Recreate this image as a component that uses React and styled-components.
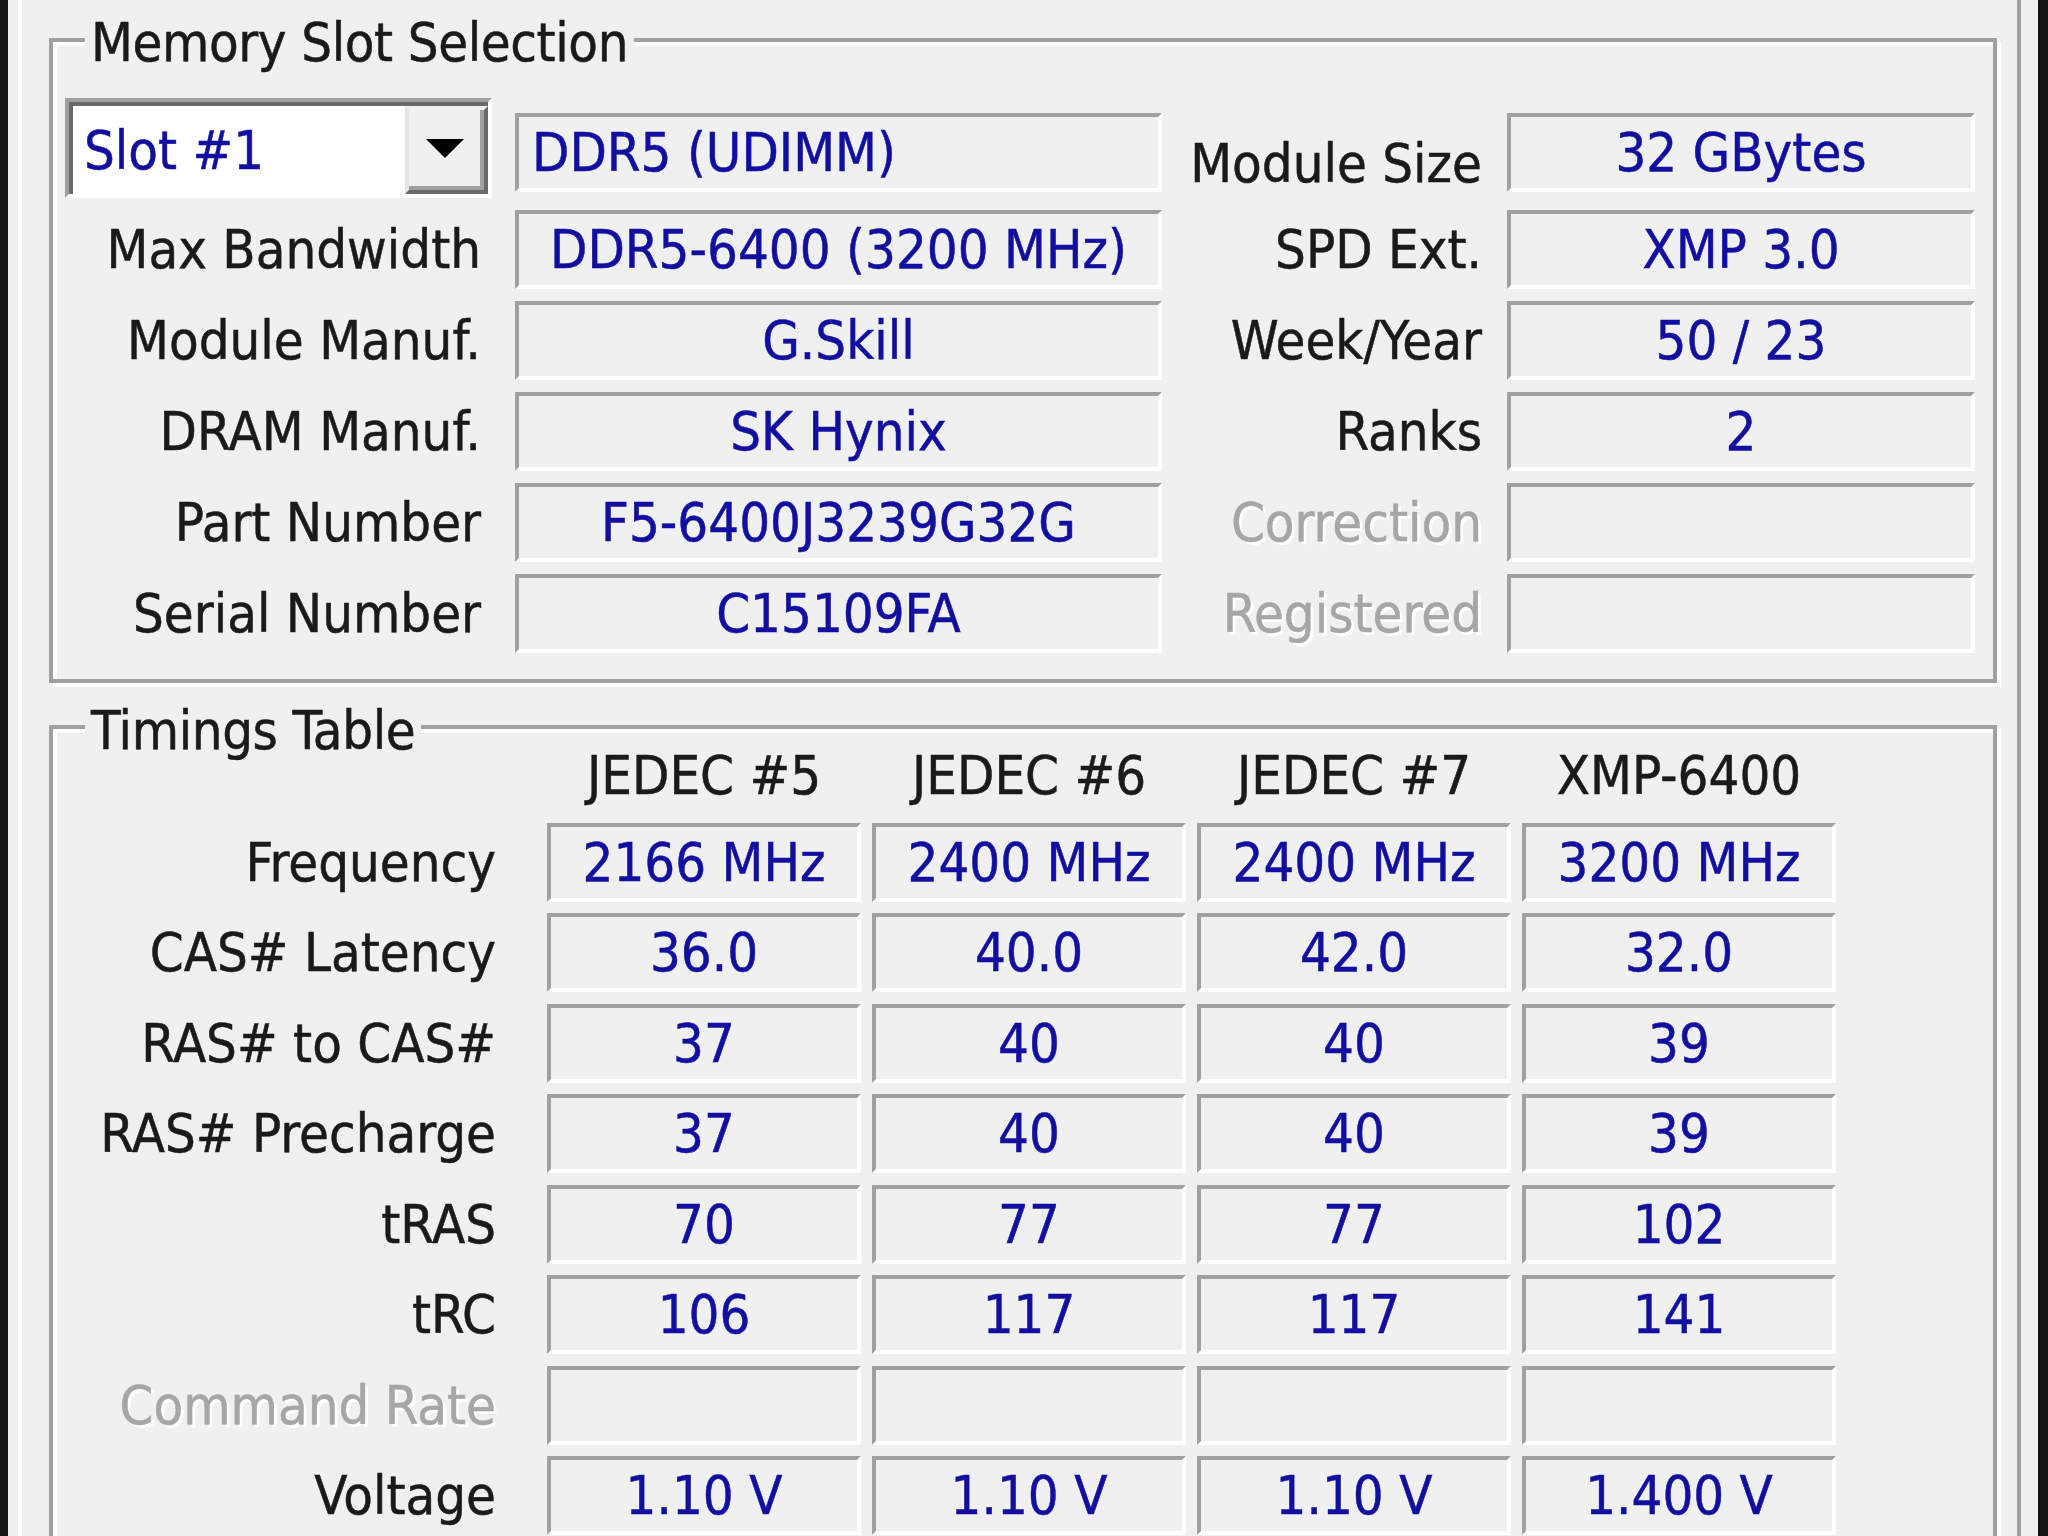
import React from 'react'
import styled, { createGlobalStyle } from 'styled-components'

//#region STYLES

const GlobalStyle = createGlobalStyle`
  html, body {
    margin: 0;
    padding: 0;
    width: 2048px;
    height: 1536px;
    overflow: hidden;
    background: #141414;
  }
  body {
    font-family: "DejaVu Sans Condensed", "Liberation Sans", sans-serif;
    font-size: 54px;
    -webkit-text-stroke: 0.5px currentColor;
  }
`

const Screen = styled.div`
  box-sizing: border-box;
  width: 2048px;
  height: 1536px;
  padding: 0 10px 0 8px;
  background: #141414;
`

const Frame = styled.div`
  box-sizing: border-box;
  height: 100%;
  padding: 0 17px 0 10px;
  background: #f0f0f0;
`

const TabPage = styled.div`
  box-sizing: border-box;
  height: 100%;
  padding: 38px 0 0 27px;
  border-left: 4px solid #ffffff;
  border-right: 4px solid #a0a0a0;
  background: #f0f0f0;
`

const GroupBox = styled.div`
  position: relative;
  box-sizing: border-box;
  width: 1948px;
  margin-bottom: 42px;
  border: 4px solid #a0a0a0;
  box-shadow: inset 4px 4px 0 #ffffff, 4px 4px 0 #ffffff;
  padding: ${props => props.$padding};
`

const Legend = styled.div`
  position: absolute;
  left: 32px;
  top: ${props => props.$top}px;
  padding: 0 6px;
  line-height: 56px;
  letter-spacing: -0.4px;
  background: #f0f0f0;
  color: #1a1a1a;
  white-space: nowrap;
`

const SlotGrid = styled.div`
  display: grid;
  grid-template-columns: 450px 647px 345px 468px;
  grid-template-rows: 100px repeat(5, 79px);
  row-gap: 12px;
`

const Label = styled.div`
  box-sizing: border-box;
  display: flex;
  align-items: center;
  justify-content: flex-end;
  padding-right: ${props => props.$pad}px;
  padding-top: ${props => props.$shift || 0}px;
  white-space: nowrap;
  color: ${props => (props.$disabled ? '#a6a6a6' : '#1a1a1a')};
  text-shadow: ${props => (props.$disabled ? '3px 3px 0 #ffffff' : 'none')};
`

const Field = styled.div`
  box-sizing: border-box;
  height: 79px;
  align-self: ${props => (props.$top ? 'start' : 'stretch')};
  margin-top: ${props => (props.$top ? '15px' : '0')};
  display: flex;
  align-items: center;
  justify-content: ${props => (props.$left ? 'flex-start' : 'center')};
  padding-left: ${props => (props.$left ? '13px' : '0')};
  border-style: solid;
  border-width: 4px;
  border-color: #a0a0a0 #ffffff #ffffff #a0a0a0;
  color: #120fa0;
  white-space: nowrap;
`

const Combo = styled.div`
  box-sizing: border-box;
  width: 427px;
  height: 100px;
  border-style: solid;
  border-width: 4px;
  border-color: #a0a0a0 #ffffff #ffffff #a0a0a0;
`

const ComboInner = styled.div`
  box-sizing: border-box;
  height: 100%;
  display: flex;
  border-top: 4px solid #696969;
  border-left: 4px solid #696969;
  background: #ffffff;
`

const ComboText = styled.div`
  flex: 1;
  display: flex;
  align-items: center;
  padding-left: 11px;
  color: #120fa0;
`

const ComboButton = styled.div`
  box-sizing: border-box;
  width: 83px;
  display: flex;
  align-items: center;
  justify-content: center;
  background: #f0f0f0;
  border-style: solid;
  border-width: 4px;
  border-color: #f0f0f0 #696969 #696969 #e3e3e3;
  box-shadow: inset -4px -4px 0 #a0a0a0;
`

const Arrow = styled.div`
  width: 0;
  height: 0;
  margin: 0 4px 4px 0;
  border-left: 19px solid transparent;
  border-right: 19px solid transparent;
  border-top: 19px solid #000000;
`

const TimingsGrid = styled.div`
  display: grid;
  grid-template-columns: 471px repeat(4, 314px);
  grid-template-rows: 60px repeat(8, 79px);
  column-gap: 11px;
  row-gap: 11.5px;
`

const ColHeader = styled.div`
  display: flex;
  align-items: center;
  justify-content: center;
  padding-bottom: 12px;
  color: #1a1a1a;
  white-space: nowrap;
`

const Spacer = styled.div``

//#endregion

const slotRows = [
  { label: 'Max Bandwidth', value: 'DDR5-6400 (3200 MHz)', rLabel: 'SPD Ext.', rValue: 'XMP 3.0' },
  { label: 'Module Manuf.', value: 'G.Skill', rLabel: 'Week/Year', rValue: '50 / 23' },
  { label: 'DRAM Manuf.', value: 'SK Hynix', rLabel: 'Ranks', rValue: '2' },
  { label: 'Part Number', value: 'F5-6400J3239G32G', rLabel: 'Correction', rValue: '', rDisabled: true },
  { label: 'Serial Number', value: 'C15109FA', rLabel: 'Registered', rValue: '', rDisabled: true },
]

const timingHeaders = ['JEDEC #5', 'JEDEC #6', 'JEDEC #7', 'XMP-6400']

const timingRows = [
  { label: 'Frequency', values: ['2166 MHz', '2400 MHz', '2400 MHz', '3200 MHz'] },
  { label: 'CAS# Latency', values: ['36.0', '40.0', '42.0', '32.0'] },
  { label: 'RAS# to CAS#', values: ['37', '40', '40', '39'] },
  { label: 'RAS# Precharge', values: ['37', '40', '40', '39'] },
  { label: 'tRAS', values: ['70', '77', '77', '102'] },
  { label: 'tRC', values: ['106', '117', '117', '141'] },
  { label: 'Command Rate', values: ['', '', '', ''], disabled: true },
  { label: 'Voltage', values: ['1.10 V', '1.10 V', '1.10 V', '1.400 V'] },
]

const App = () => {
  const renderSlotRows = () => {
    return slotRows.map(row => (
      <React.Fragment key={row.label}>
        <Label $pad={34}>{row.label}</Label>
        <Field>{row.value}</Field>
        <Label $pad={25} $disabled={row.rDisabled}>{row.rLabel}</Label>
        <Field>{row.rValue}</Field>
      </React.Fragment>
    ))
  }

  const renderTimingRows = () => {
    return timingRows.map(row => (
      <React.Fragment key={row.label}>
        <Label $pad={40} $disabled={row.disabled}>{row.label}</Label>
        {row.values.map((value, i) => (
          <Field key={i}>{value}</Field>
        ))}
      </React.Fragment>
    ))
  }

  return (
    <Screen>
      <GlobalStyle />
      <Frame>
        <TabPage>
          <GroupBox $padding="56px 18px 26px 12px">
            <Legend $top={-27}>Memory Slot Selection</Legend>
            <SlotGrid>
              <Combo>
                <ComboInner>
                  <ComboText>Slot #1</ComboText>
                  <ComboButton>
                    <Arrow />
                  </ComboButton>
                </ComboInner>
              </Combo>
              <Field $top $left>DDR5 (UDIMM)</Field>
              <Label $pad={25} $shift={30}>Module Size</Label>
              <Field $top>32 GBytes</Field>
              {renderSlotRows()}
            </SlotGrid>
          </GroupBox>
          <GroupBox $padding="22px 18px 26px 12px">
            <Legend $top={-26}>Timings Table</Legend>
            <TimingsGrid>
              <Spacer />
              {timingHeaders.map(header => (
                <ColHeader key={header}>{header}</ColHeader>
              ))}
              {renderTimingRows()}
            </TimingsGrid>
          </GroupBox>
        </TabPage>
      </Frame>
    </Screen>
  )
}

export default App
